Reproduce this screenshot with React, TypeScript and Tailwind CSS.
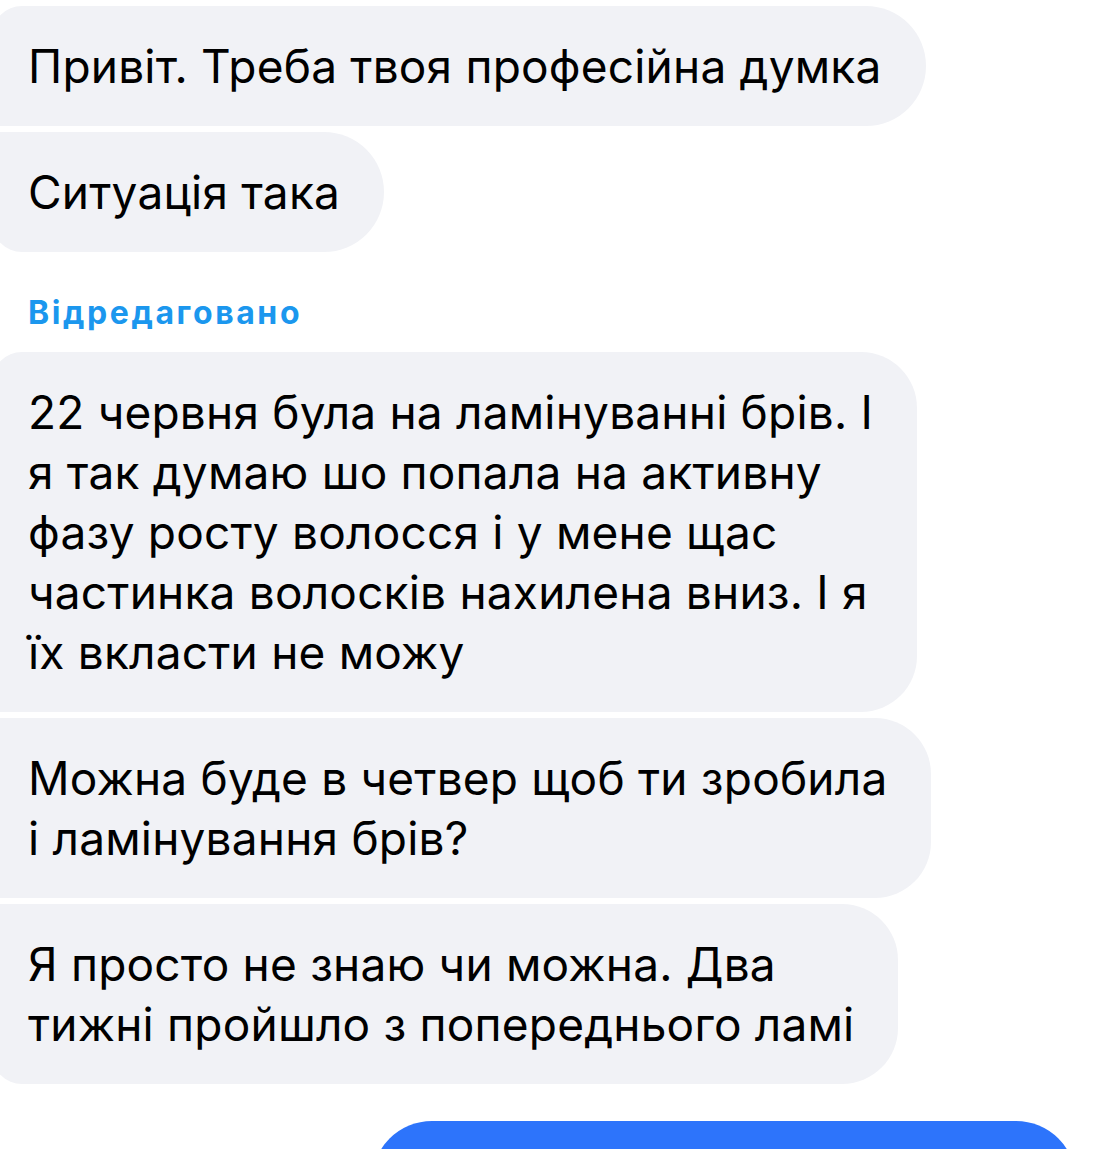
import React from 'react'

const font = { fontFamily: 'Inter, "Noto Sans", sans-serif' }

type Msg = { lines: string[]; corners: string }

const group1: Msg[] = [
  { lines: ['Привіт. Треба твоя професійна думка'], corners: 'rounded-tl-[30px] rounded-r-[60px]' },
  { lines: ['Ситуація така'], corners: 'rounded-bl-[30px] rounded-r-[60px]' },
]

const group2: Msg[] = [
  {
    lines: [
      '22 червня була на ламінуванні брів. І',
      'я так думаю шо попала на активну',
      'фазу росту волосся і у мене щас',
      'частинка волосків нахилена вниз. І я',
      'їх вкласти не можу',
    ],
    corners: 'rounded-tl-[30px] rounded-r-[56px]',
  },
  {
    lines: ['Можна буде в четвер щоб ти зробила', 'і ламінування брів?'],
    corners: 'rounded-r-[56px]',
  },
  {
    lines: ['Я просто не знаю чи можна. Два', 'тижні пройшло з попереднього ламі'],
    corners: 'rounded-bl-[30px] rounded-r-[56px]',
  },
]

function Bubble({ msg }: { msg: Msg }) {
  return (
    <div
      className={`-ml-[8px] w-fit bg-[#f1f2f6] pl-[36px] pr-[44px] py-[30px] text-[46px] leading-[60px] text-black whitespace-nowrap tracking-[0.2px] ${msg.corners}`}
    >
      {msg.lines.map((l, i) => (
        <div key={i}>{l}</div>
      ))}
    </div>
  )
}

export default function App() {
  return (
    <div className="w-[1106px] h-[1149px] overflow-hidden bg-white pt-[6px]" style={font}>
      <div className="flex flex-col gap-[6px]">
        {group1.map((m, i) => <Bubble key={i} msg={m} />)}
      </div>

      <div className="pl-[28px] pt-[40px] pb-[18px] text-[32px] font-bold leading-[42px] tracking-[2.6px] text-[#1b97ee]">
        Відредаговано
      </div>

      <div className="flex flex-col gap-[6px]">
        {group2.map((m, i) => <Bubble key={i} msg={m} />)}
      </div>

      <div className="mt-[37px] flex justify-end pr-[30px]">
        <div className="w-[704px] h-[120px] rounded-[60px] bg-[#2d74fb]" />
      </div>
    </div>
  )
}
